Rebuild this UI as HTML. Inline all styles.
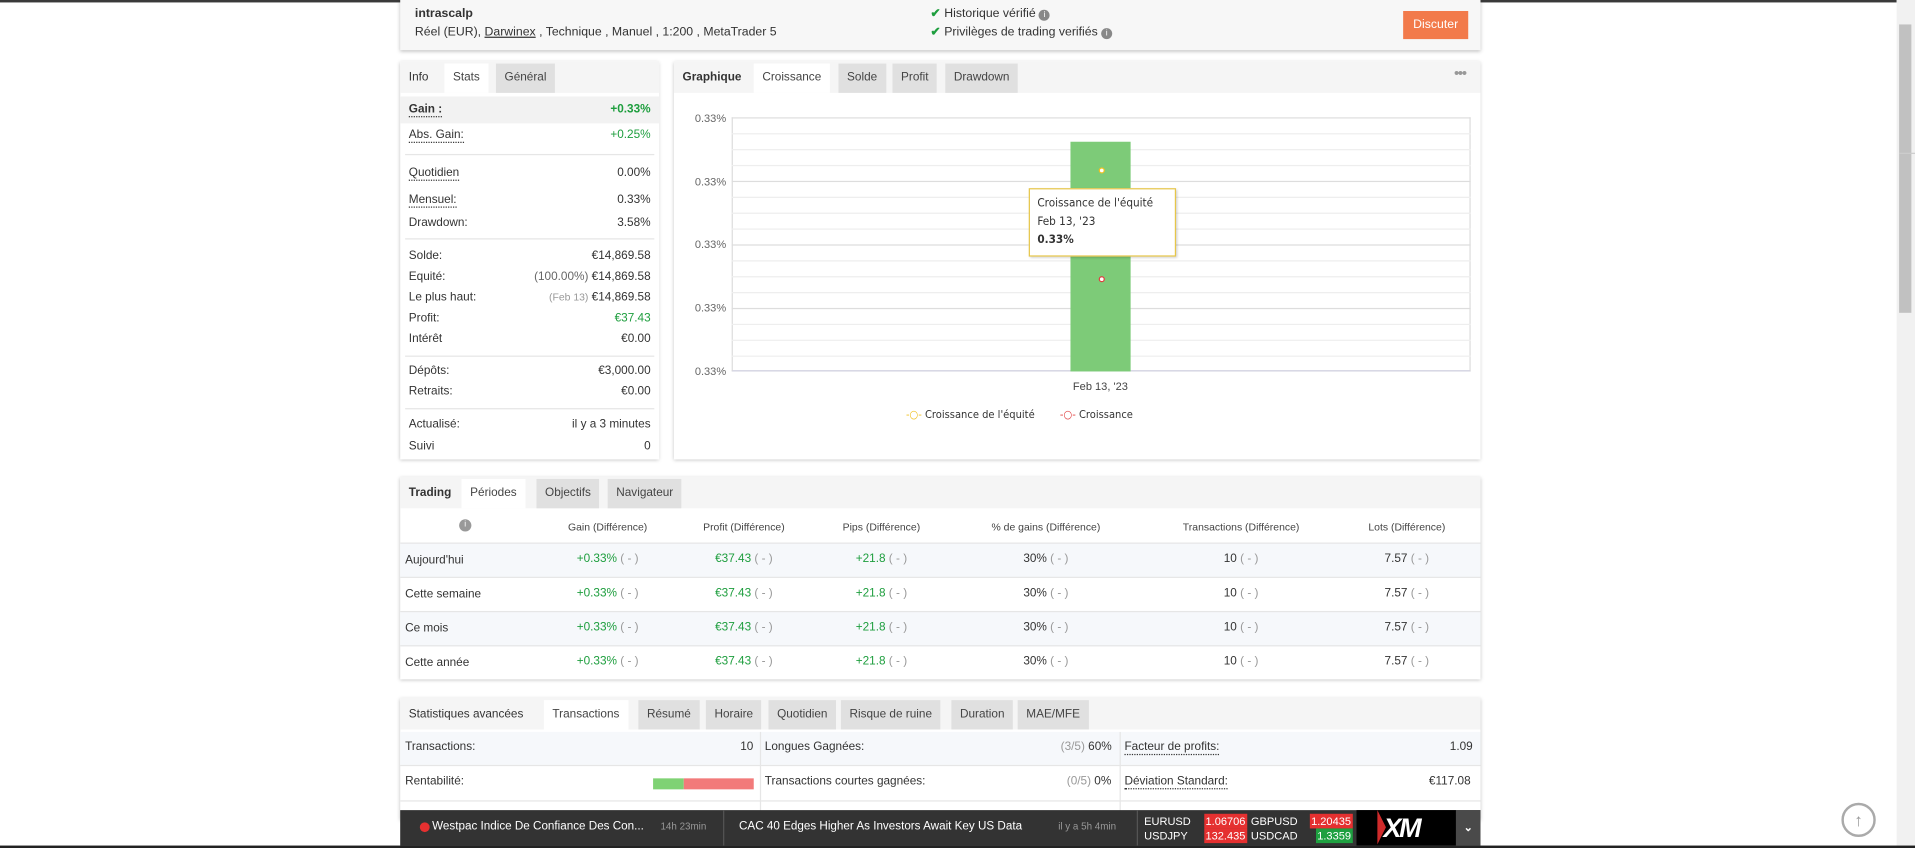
<!DOCTYPE html>
<html><head><meta charset="utf-8">
<style>
html,body{margin:0;padding:0;width:1915px;height:848px;overflow:hidden;background:#fff;}
#w{position:absolute;left:0;top:0;width:1560px;height:694px;transform-origin:0 0;transform:scale(1.2276,1.2219);font-family:"Liberation Sans",sans-serif;font-size:9.6px;color:#333;}
.a{position:absolute;}
.panel{position:absolute;background:#fff;box-shadow:0 1px 3px rgba(0,0,0,.25);}
.tabs{position:absolute;left:0;top:0;right:0;height:26px;background:#f5f5f5;}
.tab{position:absolute;top:2px;height:24px;line-height:24px;padding:0 7px;background:#e0e0e0;color:#444;}
.tab.on{background:#fff;}
.tab.first{background:transparent;color:#333;font-weight:bold;}
.g{color:#1e9e3e;}
.mut{color:#999;}
.row{position:absolute;left:7px;right:7px;height:17px;line-height:17px;}
.row .r{position:absolute;right:0;top:0;}
.dot{border-bottom:1px dotted #333;}
.sep{position:absolute;left:4px;right:4px;height:1px;background:#e6e6e6;}
.grid{position:absolute;left:596px;width:602px;height:1px;background:#eee;}
</style></head><body>
<div id="w">
<div class="a" style="left:0;top:0;width:1545px;height:2px;background:#3a3a3a"></div>
<div class="a" style="left:1545px;top:0;width:15px;height:694px;background:#f1f1f1"></div>
<div class="a" style="left:1547px;top:20px;width:10px;height:236px;background:#c1c1c1"></div>
<div class="a" style="left:1547px;top:125px;width:13px;height:1px;background:#ccc"></div>

<div class="panel" style="left:326px;top:0;width:880px;height:41px;background:#f7f7f7">
 <div class="a" style="left:12px;top:6px;font-weight:bold;font-size:10px">intrascalp</div>
 <div class="a" style="left:12px;top:21px;font-size:10px">Réel (EUR), <span style="text-decoration:underline">Darwinex</span> , Technique , Manuel , 1:200 , MetaTrader 5</div>
 <div class="a" style="left:432px;top:6px;font-size:10px"><span style="color:#1e9e3e;font-weight:bold">✔</span> Historique vérifié <span style="display:inline-block;width:9px;height:9px;border-radius:50%;background:#888;color:#fff;font-size:7px;line-height:9px;text-align:center">i</span></div>
 <div class="a" style="left:432px;top:21px;font-size:10px"><span style="color:#1e9e3e;font-weight:bold">✔</span> Privilèges de trading verifiés <span style="display:inline-block;width:9px;height:9px;border-radius:50%;background:#888;color:#fff;font-size:7px;line-height:9px;text-align:center">i</span></div>
 <div class="a" style="left:817px;top:9px;width:53px;height:23px;background:#f27a4b;color:#fff;line-height:23px;text-align:center;font-size:10px">Discuter</div>
</div>

<div class="panel" style="left:326px;top:50px;width:211px;height:326px">
 <div class="tabs"><div class="tab first" style="left:0;font-weight:normal">Info</div><div class="tab on" style="left:36px">Stats</div><div class="tab" style="left:78px">Général</div></div>
 <div class="a" style="left:0;top:29px;width:211px;height:22px;background:#f2f2f2"></div>
 <div class="row" style="top:31px;font-weight:bold"><span class="dot">Gain :</span><span class="r g">+0.33%</span></div>
 <div class="row" style="top:52px"><span class="dot">Abs. Gain:</span><span class="r g">+0.25%</span></div>
 <div class="sep" style="top:76px"></div>
 <div class="row" style="top:83px"><span class="dot">Quotidien</span><span class="r">0.00%</span></div>
 <div class="row" style="top:105px"><span class="dot">Mensuel:</span><span class="r">0.33%</span></div>
 <div class="row" style="top:124px">Drawdown:<span class="r">3.58%</span></div>
 <div class="sep" style="top:145px"></div>
 <div class="row" style="top:151px">Solde:<span class="r">€14,869.58</span></div>
 <div class="row" style="top:168px">Equité:<span class="r"><span style="color:#666">(100.00%)</span> €14,869.58</span></div>
 <div class="row" style="top:185px">Le plus haut:<span class="r"><span class="mut" style="font-size:8.5px">(Feb 13)</span> €14,869.58</span></div>
 <div class="row" style="top:202px">Profit:<span class="r g">€37.43</span></div>
 <div class="row" style="top:219px">Intérêt<span class="r">€0.00</span></div>
 <div class="sep" style="top:241px"></div>
 <div class="row" style="top:245px">Dépôts:<span class="r">€3,000.00</span></div>
 <div class="row" style="top:262px">Retraits:<span class="r">€0.00</span></div>
 <div class="sep" style="top:284px"></div>
 <div class="row" style="top:289px">Actualisé:<span class="r">il y a 3 minutes</span></div>
 <div class="row" style="top:307px">Suivi<span class="r">0</span></div>
</div>

<div class="panel" style="left:549px;top:50px;width:657px;height:326px">
 <div class="tabs"><div class="tab first" style="left:0">Graphique</div><div class="tab on" style="left:65px">Croissance</div><div class="tab" style="left:134px">Solde</div><div class="tab" style="left:178px">Profit</div><div class="tab" style="left:221px">Drawdown</div>
 <div class="a" style="right:12px;top:3px;color:#999;font-size:12px;letter-spacing:-1px">•••</div></div>
</div>
<div class="a" style="left:596px;top:96px;width:602px;height:208px;border:1px solid #ddd;border-bottom:1px solid #ccd;box-sizing:border-box"></div>
<div class="grid" style="top:109px"></div><div class="grid" style="top:122px"></div><div class="grid" style="top:135px"></div>
<div class="grid" style="top:148px;background:#ddd"></div>
<div class="grid" style="top:161px"></div><div class="grid" style="top:174px"></div><div class="grid" style="top:187px"></div>
<div class="grid" style="top:200px;background:#ddd"></div>
<div class="grid" style="top:213px"></div><div class="grid" style="top:226px"></div><div class="grid" style="top:239px"></div>
<div class="grid" style="top:252px;background:#ddd"></div>
<div class="grid" style="top:265px"></div><div class="grid" style="top:278px"></div><div class="grid" style="top:291px"></div>
<div class="a" style="left:566px;top:92px;font-size:9px;color:#666">0.33%</div>
<div class="a" style="left:566px;top:144px;font-size:9px;color:#666">0.33%</div>
<div class="a" style="left:566px;top:195px;font-size:9px;color:#666">0.33%</div>
<div class="a" style="left:566px;top:247px;font-size:9px;color:#666">0.33%</div>
<div class="a" style="left:566px;top:299px;font-size:9px;color:#666">0.33%</div>
<div class="a" style="left:872px;top:116px;width:49px;height:188px;background:#7dcb78"></div>
<div class="a" style="left:895px;top:137px;width:5px;height:5px;border-radius:50%;border:1px solid #f0c020;box-sizing:border-box;background:#fff"></div>
<div class="a" style="left:895px;top:226px;width:5px;height:5px;border-radius:50%;border:1px solid #e04040;box-sizing:border-box;background:#fff"></div>
<div class="a" style="left:838px;top:154px;width:120px;height:56px;background:#fff;border:1px solid #e6c64a;box-shadow:1px 1px 2px rgba(0,0,0,.2);box-sizing:border-box;font-family:'DejaVu Sans Condensed','DejaVu Sans',sans-serif;font-size:9.5px;line-height:15px;padding:4px 6px;color:#333">Croissance de l'équité<br>Feb 13, '23<br><b>0.33%</b></div>
<div class="a" style="left:874px;top:311px;font-size:9px;color:#444">Feb 13, '23</div>
<div class="a" style="left:738px;top:335px;font-family:'DejaVu Sans Condensed','DejaVu Sans',sans-serif;font-size:9px;color:#333"><span style="color:#f0c020">-○-</span> Croissance de l'équité &nbsp;&nbsp;&nbsp;&nbsp;&nbsp;&nbsp; <span style="color:#e04040">-○-</span> Croissance</div>

<div class="panel" style="left:326px;top:390px;width:880px;height:166px">
 <div class="tabs"><div class="tab first" style="left:0">Trading</div><div class="tab on" style="left:50px">Périodes</div><div class="tab" style="left:111px">Objectifs</div><div class="tab" style="left:169px">Navigateur</div></div>
 <div class="a" style="left:48px;top:35px;width:10px;height:10px;border-radius:50%;background:#999;color:#fff;font-size:7px;line-height:10px;text-align:center">i</div>
</div>
<div class="a" style="left:326px;top:444px;width:880px;height:28px;background:#f6f8fb;border-top:1px solid #e6e6e6"></div>
<div class="a" style="left:326px;top:472px;width:880px;height:28px;border-top:1px solid #e6e6e6"></div>
<div class="a" style="left:326px;top:500px;width:880px;height:28px;background:#f6f8fb;border-top:1px solid #e6e6e6"></div>
<div class="a" style="left:326px;top:528px;width:880px;height:28px;border-top:1px solid #e6e6e6"></div>
<div class="a" style="left:326px;top:426px;width:880px;font-size:8.5px;color:#444">
 <span class="a" style="left:129px;width:80px;text-align:center">Gain (Différence)</span>
 <span class="a" style="left:240px;width:80px;text-align:center">Profit (Différence)</span>
 <span class="a" style="left:352px;width:80px;text-align:center">Pips (Différence)</span>
 <span class="a" style="left:466px;width:120px;text-align:center">% de gains (Différence)</span>
 <span class="a" style="left:620px;width:130px;text-align:center">Transactions (Différence)</span>
 <span class="a" style="left:780px;width:80px;text-align:center">Lots (Différence)</span>
</div>
<div class="a" style="left:326px;top:453px;width:880px">
<div class="a" style="left:4px;top:0">Aujourd'hui</div><div class="a" style="left:4px;top:28px">Cette semaine</div><div class="a" style="left:4px;top:56px">Ce mois</div><div class="a" style="left:4px;top:84px">Cette année</div>
</div>
<div class="a" style="left:326px;top:453px;width:880px;line-height:28px">
 <div class="a" style="left:129px;top:-9px;width:80px;text-align:center"><span class="g">+0.33%</span> <span class="mut">( - )</span><br><span class="g">+0.33%</span> <span class="mut">( - )</span><br><span class="g">+0.33%</span> <span class="mut">( - )</span><br><span class="g">+0.33%</span> <span class="mut">( - )</span></div>
 <div class="a" style="left:240px;top:-9px;width:80px;text-align:center"><span class="g">€37.43</span> <span class="mut">( - )</span><br><span class="g">€37.43</span> <span class="mut">( - )</span><br><span class="g">€37.43</span> <span class="mut">( - )</span><br><span class="g">€37.43</span> <span class="mut">( - )</span></div>
 <div class="a" style="left:352px;top:-9px;width:80px;text-align:center"><span class="g">+21.8</span> <span class="mut">( - )</span><br><span class="g">+21.8</span> <span class="mut">( - )</span><br><span class="g">+21.8</span> <span class="mut">( - )</span><br><span class="g">+21.8</span> <span class="mut">( - )</span></div>
 <div class="a" style="left:466px;top:-9px;width:120px;text-align:center">30% <span class="mut">( - )</span><br>30% <span class="mut">( - )</span><br>30% <span class="mut">( - )</span><br>30% <span class="mut">( - )</span></div>
 <div class="a" style="left:620px;top:-9px;width:130px;text-align:center">10 <span class="mut">( - )</span><br>10 <span class="mut">( - )</span><br>10 <span class="mut">( - )</span><br>10 <span class="mut">( - )</span></div>
 <div class="a" style="left:780px;top:-9px;width:80px;text-align:center">7.57 <span class="mut">( - )</span><br>7.57 <span class="mut">( - )</span><br>7.57 <span class="mut">( - )</span><br>7.57 <span class="mut">( - )</span></div>
</div>

<div class="panel" style="left:326px;top:571px;width:880px;height:100px">
 <div class="tabs"><div class="tab first" style="left:0;font-weight:normal;color:#333">Statistiques avancées</div><div class="tab on" style="left:117px">Transactions</div><div class="tab" style="left:194px">Résumé</div><div class="tab" style="left:249px">Horaire</div><div class="tab" style="left:300px">Quotidien</div><div class="tab" style="left:359px">Risque de ruine</div><div class="tab" style="left:449px">Duration</div><div class="tab" style="left:503px">MAE/MFE</div></div>
 <div class="a" style="left:0;top:28px;width:880px;height:27px;background:#f6f8fb"></div>
 <div class="a" style="left:0;top:55px;width:880px;height:1px;background:#e6e6e6"></div>
 <div class="a" style="left:0;top:84px;width:880px;height:1px;background:#e6e6e6"></div>
 <div class="a" style="left:293px;top:28px;width:1px;height:72px;background:#e6e6e6"></div>
 <div class="a" style="left:586px;top:28px;width:1px;height:72px;background:#e6e6e6"></div>
 <div class="a" style="left:4px;top:35px">Transactions:</div><div class="a" style="left:277px;top:35px">10</div>
 <div class="a" style="left:297px;top:35px">Longues Gagnées:</div><div class="a" style="left:538px;top:35px"><span class="mut">(3/5)</span> 60%</div>
 <div class="a" style="left:590px;top:35px"><span class="dot">Facteur de profits:</span></div><div class="a" style="left:855px;top:35px">1.09</div>
 <div class="a" style="left:4px;top:63px">Rentabilité:</div>
 <div class="a" style="left:206px;top:66px;width:25px;height:9px;background:#7fd274"></div><div class="a" style="left:231px;top:66px;width:57px;height:9px;background:#f27a7a"></div>
 <div class="a" style="left:297px;top:63px">Transactions courtes gagnées:</div><div class="a" style="left:543px;top:63px"><span class="mut">(0/5)</span> 0%</div>
 <div class="a" style="left:590px;top:63px"><span class="dot">Déviation Standard:</span></div><div class="a" style="left:838px;top:63px">€117.08</div>
</div>

<div class="a" style="left:326px;top:663px;width:880px;height:29px;background:#333;color:#fff;font-size:9.5px">
 <div class="a" style="left:16px;top:10px;width:8px;height:8px;border-radius:50%;background:#e53030"></div>
 <div class="a" style="left:26px;top:8px">Westpac Indice De Confiance Des Con...</div>
 <div class="a" style="left:212px;top:9px;font-size:8px;color:#999">14h 23min</div>
 <div class="a" style="left:263px;top:0;width:1px;height:29px;background:#555"></div>
 <div class="a" style="left:276px;top:8px">CAC 40 Edges Higher As Investors Await Key US Data</div>
 <div class="a" style="left:536px;top:9px;font-size:8px;color:#999">il y a 5h 4min</div>
 <div class="a" style="left:600px;top:0;width:1px;height:29px;background:#555"></div>
 <div class="a" style="left:606px;top:3px;font-size:9px;line-height:12px">EURUSD<br>USDJPY</div>
 <div class="a" style="left:655px;top:3px;font-size:9px;line-height:12px;background:#e53030;padding:0 1px">1.06706</div>
 <div class="a" style="left:655px;top:15px;font-size:9px;line-height:12px;background:#e53030;padding:0 1px">132.435</div>
 <div class="a" style="left:693px;top:3px;font-size:9px;line-height:12px">GBPUSD<br>USDCAD</div>
 <div class="a" style="left:741px;top:3px;font-size:9px;line-height:12px;background:#e53030;padding:0 1px">1.20435</div>
 <div class="a" style="left:746px;top:15px;font-size:9px;line-height:12px;background:#1ea040;padding:0 1px">1.3359</div>
 <div class="a" style="left:779px;top:0;width:81px;height:29px;background:#000"></div>
 <div class="a" style="left:796px;top:0;width:0;height:0;border-left:7px solid #e53030;border-top:14px solid transparent;border-bottom:14px solid transparent;opacity:.9"></div>
 <div class="a" style="left:801px;top:2px;font-size:22px;font-weight:bold;font-style:italic;letter-spacing:-2px">XM</div>
 <div class="a" style="left:860px;top:0;width:20px;height:29px;background:#4a4a4a;text-align:center;line-height:29px;font-size:9px;font-weight:bold">⌄</div>
</div>
<div class="a" style="left:1500px;top:657px;width:24px;height:24px;border:2px solid #aaa;border-radius:50%;color:#999;text-align:center;line-height:24px;font-size:14px">↑</div>
<div class="a" style="left:0;top:692px;width:1560px;height:2px;background:#222"></div>
</div>
</body></html>
